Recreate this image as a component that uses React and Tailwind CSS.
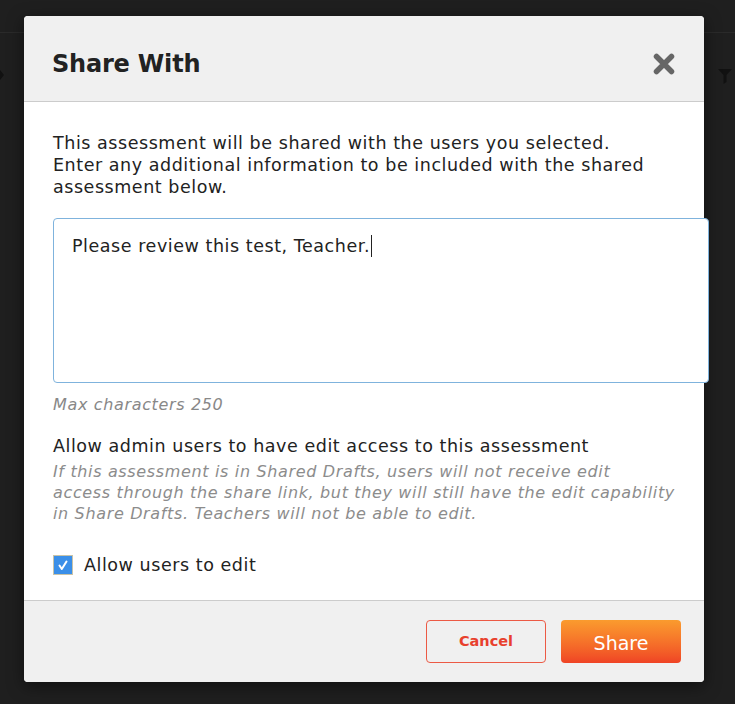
import React from "react";

export default function App() {
  return (
    <div className="relative w-[735px] h-[704px] bg-[#1f1f1f] overflow-hidden" style={{ fontFamily: '"DejaVu Sans", Verdana, sans-serif' }}>
      {/* background page hints */}
      <div className="absolute left-0 top-[32px] w-full h-px bg-[#2a2a2a]" />
      <div className="absolute left-0 top-[70px] w-0 h-0 border-t-[5px] border-b-[5px] border-l-[4px] border-t-transparent border-b-transparent border-l-[#111]" />
      <svg className="absolute left-[718px] top-[68px]" width="14" height="16" viewBox="0 0 14 16">
        <path d="M0 1 H14 L8.5 7 V14 L5.5 16 V7 Z" fill="#111" />
      </svg>

      {/* modal */}
      <div className="absolute left-[24px] top-[16px] w-[680px] h-[666px] rounded-[4px] bg-white shadow-[0_4px_16px_rgba(0,0,0,0.5)] flex flex-col">
        <div className="h-[86px] bg-[#f0f0f0] border-b border-[#cccccc] rounded-t-[4px] flex items-center justify-between pl-[28px] pr-[29px]">
          <h2 className="text-[24px] font-bold text-[#222] tracking-[-0.2px] mt-[11px]">Share With</h2>
          <svg width="22" height="22" viewBox="0 0 22 22" className="mt-[10px]">
            <path d="M3.5 3.5 L18.5 18.5 M18.5 3.5 L3.5 18.5" stroke="#666" strokeWidth="5.5" strokeLinecap="round" />
          </svg>
        </div>
        <div className="flex-1 pl-[29px] pt-[30px] text-[#222] text-[17.5px] tracking-[0.55px]">
          <p className="leading-[22px]">
            This assessment will be shared with the users you selected.<br />
            Enter any additional information to be included with the shared<br />
            assessment below.
          </p>
          <div className="mt-[20px] w-[656px] h-[165px] border border-[#7fb3dd] rounded-[4px] bg-white pl-[18px] pt-[16px] leading-[22px]">
            Please review this test, Teacher.<span className="inline-block w-px h-[22px] bg-[#222] align-top ml-px" />
          </div>
          <div className="mt-[12px] text-[16px] italic text-[#888] leading-[20px] tracking-[0.65px]">Max characters 250</div>
          <div className="mt-[20px] leading-[22px]">Allow admin users to have edit access to this assessment</div>
          <div className="mt-[4px] text-[16px] italic text-[#8c8c8c] leading-[21px] tracking-[0.65px] w-[660px]">
            If this assessment is in Shared Drafts, users will not receive edit<br />
            access through the share link, but they will still have the edit capability<br />
            in Share Drafts. Teachers will not be able to edit.
          </div>
          <label className="mt-[30px] flex items-center gap-[11px] leading-[22px]">
            <span className="w-[20px] h-[20px] bg-[#3b8fe8] border border-[#c9c3a8] flex items-center justify-center">
              <svg width="12" height="12" viewBox="0 0 12 12">
                <path d="M2.5 6.5 L4.8 10 L9.5 2.5" stroke="white" strokeWidth="2" fill="none" strokeLinecap="round" strokeLinejoin="round" />
              </svg>
            </span>
            Allow users to edit
          </label>
        </div>
        <div className="h-[82px] bg-[#f0f0f0] border-t border-[#cccccc] rounded-b-[4px] flex items-center justify-end gap-[15px] pr-[23px]">
          <button className="w-[120px] h-[43px] rounded-[4px] border border-[#ec5a45] text-[#e8402d] font-bold text-[14.5px]">Cancel</button>
          <button className="w-[120px] h-[43px] rounded-[4px] bg-gradient-to-b from-[#fa9b2e] to-[#ef4325] text-white text-[19px] pt-[3px]">Share</button>
        </div>
      </div>
    </div>
  );
}
